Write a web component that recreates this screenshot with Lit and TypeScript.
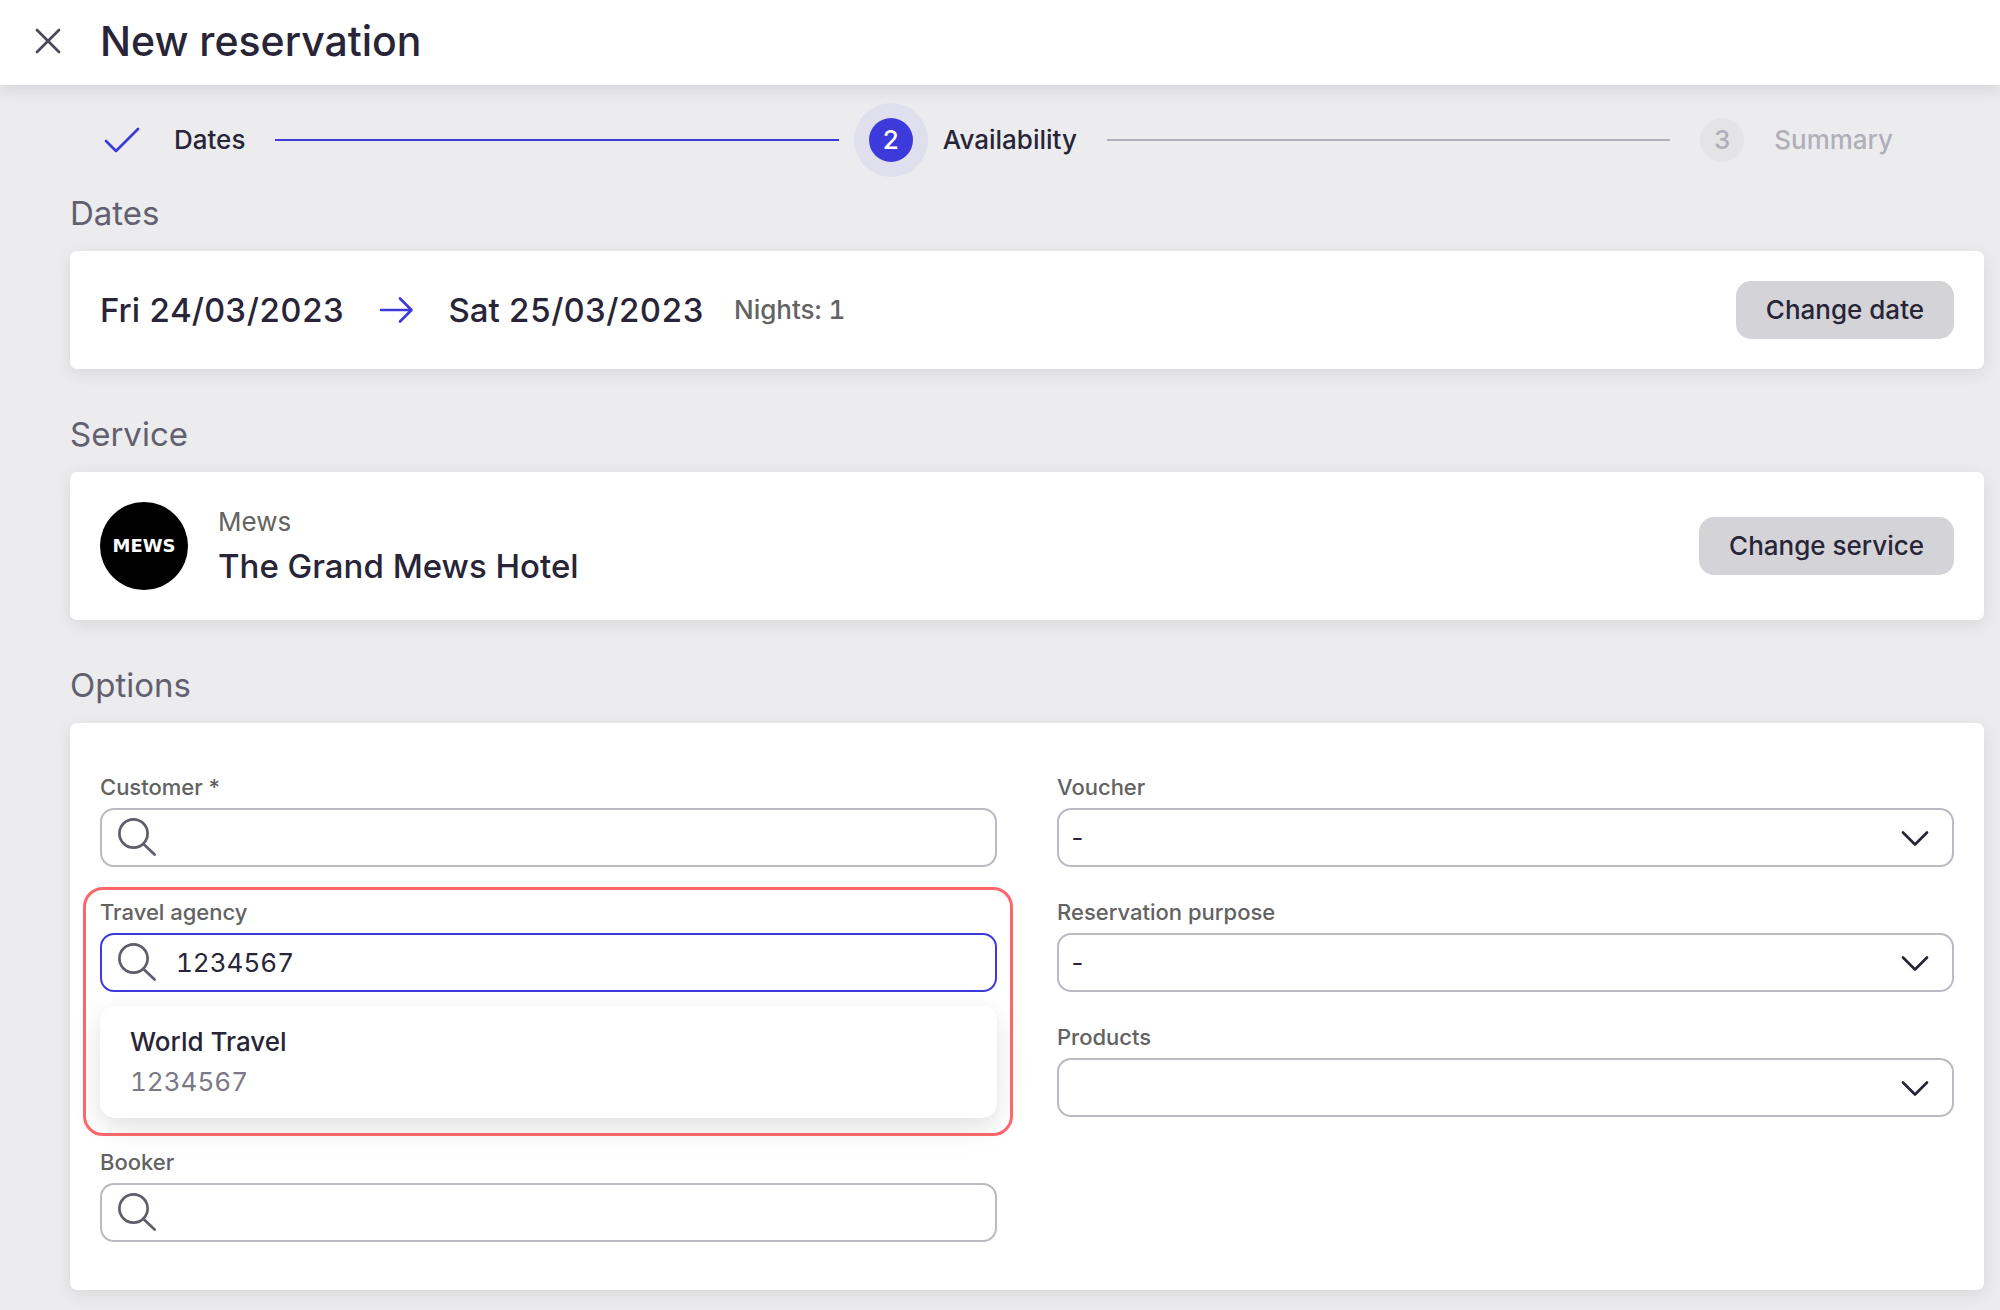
import { LitElement, html, css, svg, nothing } from "lit";
import { customElement, property } from "lit/decorators.js";
import { classMap } from "lit/directives/class-map.js";

const icons = {
  close: { size: 44, d: svg`<path d="M11 11 33 33M33 11 11 33" />` },
  check: { size: 44, d: svg`<path d="M6 23 16 33 38 11" />` },
  arrow: { size: 44, d: svg`<path d="M7 22H37M26 10.5 37.5 22 26 33.5" />` },
  search: {
    size: 44,
    d: svg`<circle cx="19.5" cy="17.5" r="14.1" /><path d="M29.5 28 40.6 38.6" />`,
  },
  chevron: { size: 44, d: svg`<path d="M10 16.5 22 28.5 34 16.5" />` },
};

const icon = (name: keyof typeof icons) => html`
  <svg
    class="icon ${name}"
    width=${icons[name].size}
    height=${icons[name].size}
    viewBox="0 0 44 44"
    aria-hidden="true"
  >
    ${icons[name].d}
  </svg>
`;

const shared = css`
  * {
    box-sizing: border-box;
    margin: 0;
  }
  button,
  input,
  select {
    font: inherit;
    color: inherit;
  }
  .icon {
    flex: none;
    display: block;
    fill: none;
    stroke: currentColor;
    stroke-width: 2.7;
    stroke-linecap: round;
    stroke-linejoin: round;
  }
`;

@customElement("progress-steps")
class ProgressSteps extends LitElement {
  static styles = [
    shared,
    css`
      :host {
        display: block;
      }
      .steps {
        display: flex;
        align-items: center;
        gap: 30px;
        height: 108px;
        padding: 2px 91px 0 30px;
        list-style: none;
        font-weight: 500;
      }
      .step {
        display: flex;
        align-items: center;
        gap: 30px;
      }
      .line {
        flex: 1;
        height: 2px;
        background: #b2b1bb;
      }
      .line.done {
        background: #3d3adb;
      }
      .check {
        color: #3d3adb;
      }
      .number {
        display: grid;
        place-items: center;
        width: 44px;
        height: 44px;
        border-radius: 50%;
        background: #e4e4e6;
      }
      .current .number {
        color: #fff;
        background: #3d3adb;
        box-shadow: 0 0 0 15px #e0dfed;
      }
      .upcoming {
        color: #b0afb9;
      }
    `,
  ];

  render() {
    return html`
      <ol class="steps">
        <li class="step">${icon("check")}<span>Dates</span></li>
        <li class="line done" role="presentation"></li>
        <li class="step current" aria-current="step">
          <span class="number">2</span><span>Availability</span>
        </li>
        <li class="line" role="presentation"></li>
        <li class="step upcoming">
          <span class="number">3</span><span>Summary</span>
        </li>
      </ol>
    `;
  }
}

@customElement("form-field")
class FormField extends LitElement {
  @property() label = "";
  @property() kind: "search" | "select" = "search";
  @property() value = "";
  @property({ type: Boolean }) active = false;

  static styles = [
    shared,
    css`
      :host {
        display: block;
      }
      .label {
        display: block;
        margin-bottom: 6px;
        font-size: 22px;
        line-height: 30px;
        font-weight: 500;
        color: #626262;
      }
      .control {
        display: grid;
        align-items: center;
        height: 59px;
      }
      .control > * {
        grid-area: 1 / 1;
      }
      .input {
        width: 100%;
        height: 59px;
        border: 2px solid #bbbac3;
        border-radius: 14px;
        background: #fff;
        outline: none;
        appearance: none;
        font-variant-numeric: tabular-nums;
      }
      .input.text {
        padding: 0 16px 0 74px;
      }
      .input.choice {
        padding: 0 60px 0 10px;
      }
      .input.active {
        border-color: #3d3adb;
      }
      .icon {
        pointer-events: none;
      }
      .search {
        margin-left: 14px;
        color: #5f5d6c;
      }
      .chevron {
        justify-self: end;
        margin-right: 17px;
      }
    `,
  ];

  render() {
    const classes = (type: string) =>
      classMap({ input: true, [type]: true, active: this.active });
    return html`
      <label class="label" for="control">${this.label}</label>
      <div class="control">
        ${this.kind === "search"
          ? html`<input
                id="control"
                class=${classes("text")}
                type="text"
                autocomplete="off"
                .value=${this.value}
              />${icon("search")}`
          : html`<select id="control" class=${classes("choice")}>
                <option>${this.value || nothing}</option></select
              >${icon("chevron")}`}
      </div>
    `;
  }
}

@customElement("app-root")
class AppRoot extends LitElement {
  static styles = [
    shared,
    css`
      :host {
        display: block;
        min-height: 100vh;
        background: #ececee;
        color: #272537;
        font-family: Inter, "Liberation Sans", sans-serif;
        font-size: 26px;
        line-height: 40px;
      }
      .header {
        display: flex;
        align-items: center;
        gap: 30px;
        height: 85px;
        padding: 0 26px 3px;
        background: #fff;
        box-shadow: 0 4px 16px rgba(39, 37, 55, 0.12);
      }
      .close-button {
        padding: 0;
        border: 0;
        background: none;
        color: #4a485a;
        cursor: pointer;
      }
      .title {
        font-size: 41px;
        line-height: 48px;
        font-weight: 500;
      }
      .content {
        padding: 0 16px 18px 70px;
      }
      .section + .section {
        margin-top: 45px;
      }
      .heading {
        margin-bottom: 18px;
        font-size: 33px;
        line-height: 40px;
        font-weight: 400;
        color: #62606f;
      }
      .card {
        display: flex;
        align-items: center;
        gap: 30px;
        padding: 30px;
        border-radius: 7px;
        background: #fff;
        box-shadow: 0 4px 16px rgba(39, 37, 55, 0.1);
      }
      .strong {
        font-size: 33px;
        line-height: 48px;
        font-weight: 500;
      }
      .muted {
        color: #636363;
      }
      .medium {
        font-weight: 500;
      }
      .dates {
        font-variant-numeric: tabular-nums;
      }
      .arrow {
        color: #3d3adb;
      }
      .action {
        height: 58px;
        margin-left: auto;
        padding: 0 30px;
        border: 0;
        border-radius: 15px;
        background: #d4d3d8;
        font-weight: 500;
        cursor: pointer;
      }
      .logo {
        display: grid;
        place-items: center;
        width: 88px;
        height: 88px;
        border-radius: 50%;
        background: #000;
        color: #fff;
        font-family: "DejaVu Sans", sans-serif;
        font-size: 18px;
        font-weight: 700;
      }
      .options {
        display: grid;
        grid-template-columns: 1fr 1fr;
        gap: 60px;
        padding: 49px 30px 48px;
      }
      .column {
        display: grid;
        grid-template-rows: repeat(4, 1fr);
        gap: 30px;
      }
      .booker {
        grid-row: 4;
      }
      .lookup {
        position: relative;
        z-index: 1;
      }
      .highlight {
        position: absolute;
        inset: -10px -16px -144px -17px;
        border: 3px solid #ff666c;
        border-radius: 20px;
        pointer-events: none;
      }
      .results {
        position: absolute;
        top: 100%;
        left: 0;
        right: 0;
        margin-top: 14px;
        padding: 0;
        border-radius: 15px;
        background: #fff;
        box-shadow: 0 8px 40px rgba(0, 0, 0, 0.06),
          0 10px 20px rgba(0, 0, 0, 0.07);
        list-style: none;
      }
      .result {
        display: grid;
        width: 100%;
        padding: 16px 30px;
        border: 0;
        background: none;
        text-align: left;
        cursor: pointer;
      }
      .code {
        color: #7b7986;
        font-variant-numeric: tabular-nums;
      }
    `,
  ];

  render() {
    return html`
      <header class="header">
        <button class="close-button" type="button" aria-label="Close">
          ${icon("close")}
        </button>
        <h1 class="title">New reservation</h1>
      </header>
      <main class="content">
        <progress-steps></progress-steps>

        <section class="section">
          <h2 class="heading">Dates</h2>
          <div class="card dates">
            <span class="strong">Fri 24/03/2023</span>
            ${icon("arrow")}
            <span class="strong">Sat 25/03/2023</span>
            <span class="muted medium">Nights: 1</span>
            <button class="action" type="button">Change date</button>
          </div>
        </section>

        <section class="section">
          <h2 class="heading">Service</h2>
          <div class="card">
            <div class="logo">MEWS</div>
            <div>
              <p class="muted">Mews</p>
              <p class="strong">The Grand Mews Hotel</p>
            </div>
            <button class="action" type="button">Change service</button>
          </div>
        </section>

        <section class="section">
          <h2 class="heading">Options</h2>
          <form class="card options">
            <div class="column">
              <form-field label="Customer *"></form-field>
              <div class="lookup">
                <form-field
                  label="Travel agency"
                  value="1234567"
                  active
                ></form-field>
                <ul class="results">
                  <li>
                    <button class="result" type="button">
                      <span class="medium">World Travel</span>
                      <span class="code">1234567</span>
                    </button>
                  </li>
                </ul>
                <div class="highlight"></div>
              </div>
              <form-field class="booker" label="Booker"></form-field>
            </div>
            <div class="column">
              <form-field kind="select" label="Voucher" value="-"></form-field>
              <form-field
                kind="select"
                label="Reservation purpose"
                value="-"
              ></form-field>
              <form-field kind="select" label="Products"></form-field>
            </div>
          </form>
        </section>
      </main>
    `;
  }
}
